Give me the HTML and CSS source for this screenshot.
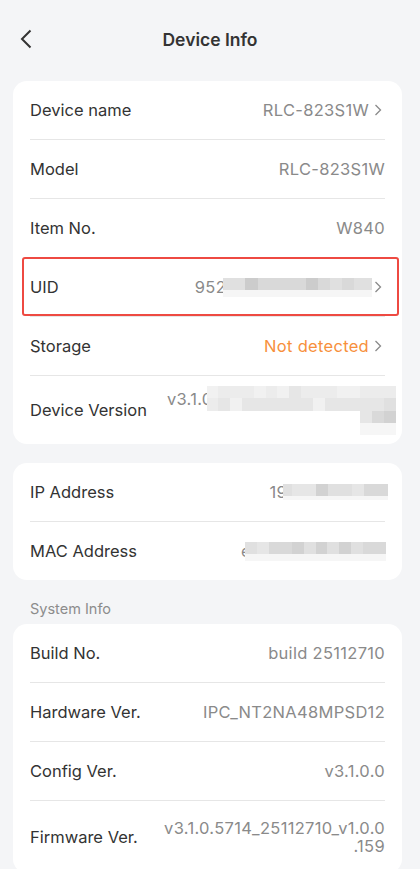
FILE: index.html
```html
<!DOCTYPE html>
<html lang="en">
<head>
    <meta charset="UTF-8">
    <meta name="viewport" content="width=device-width, initial-scale=1.0">
    <title>Device Info</title>
    <link rel="stylesheet" href="styles.css">
</head>
<body>

    <header class="header">
        <button class="back-btn" aria-label="Back">
            <svg width="12" height="20" viewBox="0 0 12 20"><path d="M10.5 1.5 L2 10 L10.5 18.5" fill="none" stroke="#333" stroke-width="2"/></svg>
        </button>
        <h1>Device Info</h1>
        <span></span>
    </header>

    <section class="card card-first">
        <div class="row">
            <span class="label">Device name</span>
            <span class="value">RLC-823S1W<svg class="arrow" width="8" height="12" viewBox="0 0 8 12"><path d="M1.5 1 L6.5 6 L1.5 11" fill="none" stroke="#8a8a8a" stroke-width="1.3"/></svg></span>
        </div>
        <div class="row">
            <span class="label">Model</span>
            <span class="value">RLC-823S1W</span>
        </div>
        <div class="row">
            <span class="label">Item No.</span>
            <span class="value">W840</span>
        </div>
        <div class="row highlight">
            <span class="label">UID</span>
            <span class="value">952<span class="blur blur-uid">
                <i class="s4"></i><i class="s1"></i><i class="s3"></i><i class="s3"></i><i class="s3"></i><i class="s1"></i><i class="s3"></i><i class="s4"></i><i class="s3"></i><i class="s4"></i>
                <i class="fade"></i>
            </span><svg class="arrow arrow-tight" width="8" height="12" viewBox="0 0 8 12"><path d="M1.5 1 L6.5 6 L1.5 11" fill="none" stroke="#8a8a8a" stroke-width="1.3"/></svg></span>
        </div>
        <div class="row">
            <span class="label">Storage</span>
            <span class="value warn">Not detected<svg class="arrow" width="8" height="12" viewBox="0 0 8 12"><path d="M1.5 1 L6.5 6 L1.5 11" fill="none" stroke="#8a8a8a" stroke-width="1.3"/></svg></span>
        </div>
        <div class="row row-version">
            <span class="label">Device Version</span>
            <span class="value"><span class="ver-text">v3.1.0</span><span class="blur blur-ver">
                <i class="s7"></i><i class="s6"></i><i class="s6"></i><i class="s6"></i><i class="s7"></i><i class="s6"></i><i class="s7"></i><i class="s5"></i><i class="s6"></i><i class="s6"></i><i class="s6"></i><i class="s7"></i><i class="s7"></i><i class="s6"></i><i class="s6"></i><i class="s6"></i>
                <i class="s6"></i><i class="s5"></i><i class="s7"></i><i class="s5"></i><i class="s5"></i><i class="s5"></i><i class="s5"></i><i class="s5"></i><i class="s5"></i><i class="s7"></i><i class="s5"></i><i class="s5"></i><i class="s5"></i><i class="s5"></i><i class="s5"></i><i class="s4"></i>
                <i class="skip"></i><i class="s5"></i><i class="s3"></i><i class="s2"></i>
                <i class="skip"></i><i class="fade"></i><i class="fade"></i><i class="fade"></i>
            </span></span>
        </div>
    </section>

    <section class="card">
        <div class="row">
            <span class="label">IP Address</span>
            <span class="value">19<span class="blur blur-ip">
                <i class="s4"></i><i class="s5"></i><i class="s5"></i><i class="s2"></i><i class="s4"></i><i class="s4"></i><i class="s5"></i><i class="s3"></i><i class="s3"></i>
                <i class="fade"></i>
            </span></span>
        </div>
        <div class="row">
            <span class="label">MAC Address</span>
            <span class="value">e<span class="blur blur-mac">
                <i class="s4"></i><i class="s5"></i><i class="s3"></i><i class="s3"></i><i class="s2"></i><i class="s4"></i><i class="s2"></i><i class="s4"></i><i class="s2"></i><i class="s4"></i><i class="s3"></i><i class="s3"></i>
                <i class="fade"></i>
            </span></span>
        </div>
    </section>

    <p class="section-title">System Info</p>

    <section class="card card-system">
        <div class="row">
            <span class="label">Build No.</span>
            <span class="value">build 25112710</span>
        </div>
        <div class="row">
            <span class="label">Hardware Ver.</span>
            <span class="value">IPC_NT2NA48MPSD12</span>
        </div>
        <div class="row">
            <span class="label">Config Ver.</span>
            <span class="value">v3.1.0.0</span>
        </div>
        <div class="row row-firmware">
            <span class="label">Firmware Ver.</span>
            <span class="value multi">v3.1.0.5714_25112710_v1.0.0<br>.159</span>
        </div>
    </section>

</body>
</html>
```

FILE: styles.css
```css
body {
    font-family: Inter, "Noto Sans", sans-serif;
    background-color: #f4f5f7;
    color: #333;
    margin: 0;
    padding: 0 0 40px;
}
.header {
    display: grid;
    grid-template-columns: 60px 1fr 60px;
    align-items: center;
    height: 78px;
}
.back-btn {
    background: none;
    border: none;
    padding: 0 0 0 20px;
    display: flex;
    align-items: center;
    cursor: pointer;
}
.header h1 {
    margin: 0;
    text-align: center;
    font-size: 17.5px;
    font-weight: 600;
    color: #333;
}
.card {
    background-color: white;
    border-radius: 14px;
    margin: 19px 18px 0 13px;
    padding: 0 17px;
}
.card-first {
    margin-top: 3px;
}
.card-system {
    margin-top: 0;
}
.row {
    position: relative;
    display: flex;
    align-items: center;
    justify-content: space-between;
    gap: 20px;
    min-height: 58px;
    border-bottom: 1px solid #e6e6e6;
}
.row:last-child {
    border-bottom: none;
}
.label {
    font-size: 16.5px;
    color: #333;
    white-space: nowrap;
}
.value {
    display: flex;
    align-items: center;
    font-size: 16.5px;
    letter-spacing: 0.3px;
    line-height: 20px;
    color: #8a8a8a;
    text-align: right;
    white-space: nowrap;
}
.value.warn {
    color: #f7903c;
}
.arrow {
    margin: 0 3px 0 5px;
    flex-shrink: 0;
}
.arrow-tight {
    margin-left: 2px;
}
.highlight::after {
    content: '';
    position: absolute;
    top: -1px;
    bottom: 0;
    left: -8px;
    right: -14px;
    border: 2px solid #ee4a42;
    border-radius: 3px;
}
.row-version {
    min-height: 68px;
}
.row-version .value {
    align-items: flex-start;
}
.ver-text {
    margin-top: 4px;
    line-height: 18px;
}
.row-firmware {
    min-height: 72px;
}
.value.multi {
    display: block;
    line-height: 18px;
}
.section-title {
    margin: 0 0 0 30px;
    padding: 20px 0 6px;
    font-size: 14.5px;
    line-height: 18px;
    color: #8c8c8c;
}

/* pixelated blur blocks */
.blur {
    display: grid;
    flex-shrink: 0;
}
.blur i {
    display: block;
}
.blur .s1 { background-color: #cccccc; }
.blur .s2 { background-color: #d2d2d2; }
.blur .s3 { background-color: #d9d9d9; }
.blur .s4 { background-color: #e0e0e0; }
.blur .s5 { background-color: #e6e6e6; }
.blur .s6 { background-color: #ececec; }
.blur .s7 { background-color: #f1f1f1; }
.blur .fade { background-color: #f6f6f6; }
.blur-uid {
    grid-template-columns: 22px 13px 11px 13px 24px 12px 12px 12px 12px 18px;
    grid-template-rows: 12px 7px;
    margin-left: -3px;
}
.blur-uid .fade,
.blur-ip .fade,
.blur-mac .fade {
    grid-column: 1 / -1;
}
.blur-ver {
    width: 189px;
    grid-template-columns: repeat(16, 1fr);
    grid-template-rows: 12px 13px 12px 12px;
    margin: 0 -3px 0 -6px;
}
.blur-ver .skip {
    grid-column: span 13;
}
.blur-ip {
    grid-template-columns: 9px repeat(8, 12px);
    grid-template-rows: 12px 4px;
    margin: 0 -3px 0 -4px;
}
.blur-mac {
    grid-template-columns: repeat(12, 11.75px);
    grid-template-rows: 12px 7px;
    margin: 0 -1px 0 -6px;
}
```
